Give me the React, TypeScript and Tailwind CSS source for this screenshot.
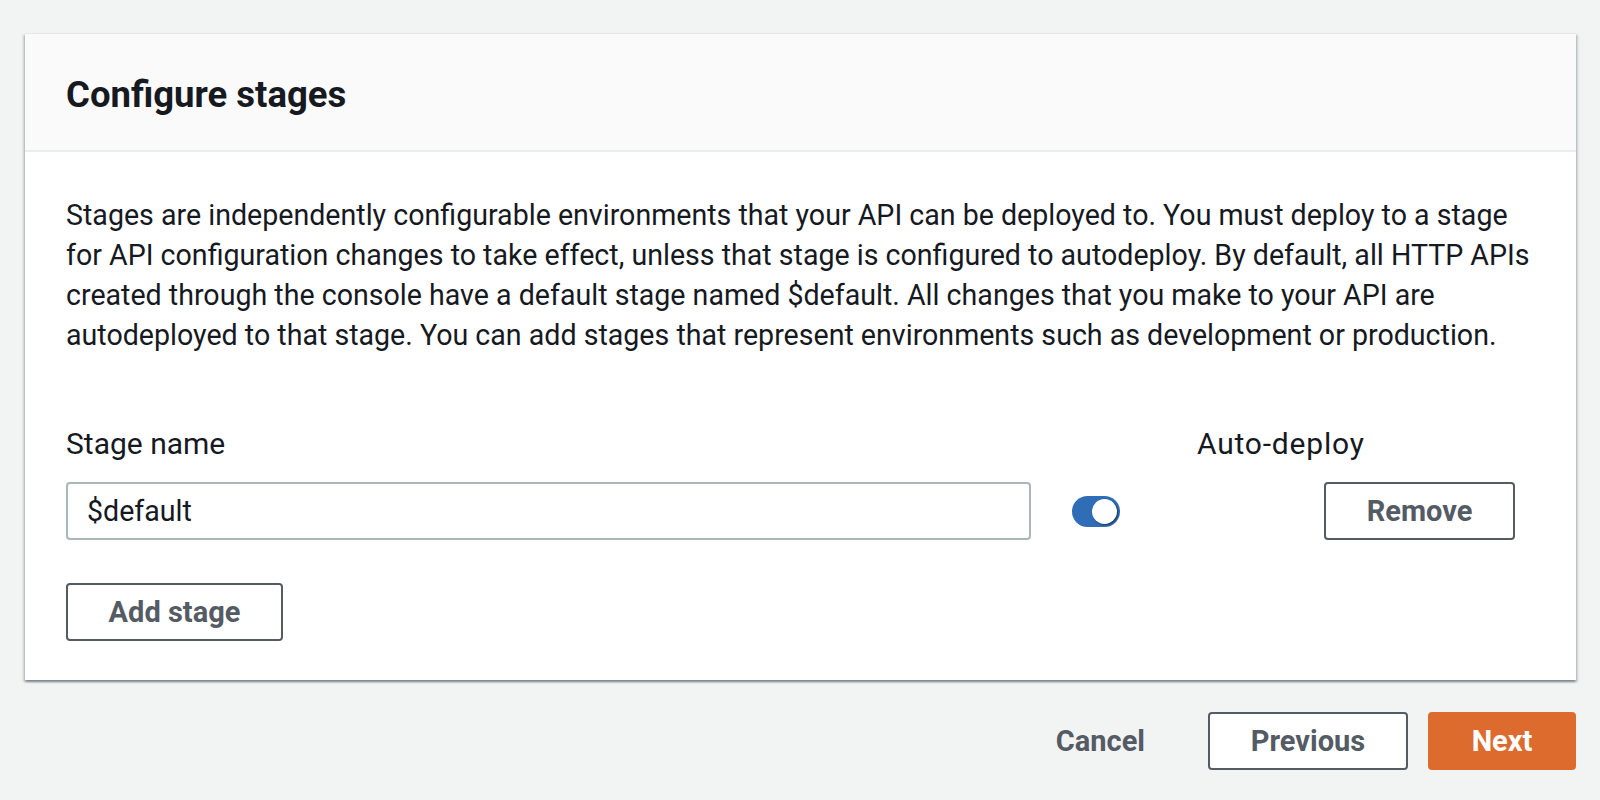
import React from "react";

const btn =
  "h-[58px] rounded-[4px] border-2 text-[29px] font-bold leading-none flex items-center justify-center";

export default function App() {
  return (
    <div className="min-h-[800px] w-full bg-[#f2f3f3] pt-[33px] pl-[25px] pr-[24px] font-['Roboto',sans-serif] text-[#16191f]">
      <div className="bg-white border-t border-[#e6e8e8] shadow-[0_2px_2px_0_rgba(0,28,36,0.3),2px_2px_2px_0_rgba(0,28,36,0.15),-2px_2px_2px_0_rgba(0,28,36,0.15)]">
        <div className="bg-[#fafafa] border-b-2 border-[#eaeded] pl-[41px] pt-[39px] pb-[33px]">
          <h2 className="text-[36.5px] leading-[44px] font-bold">Configure stages</h2>
        </div>
        <div className="px-[41px] pt-[43px] pb-[39px]">
          <p className="text-[28.6px] leading-[40px]">
            Stages are independently configurable environments that your API can be deployed to. You must deploy to a
            stage for API configuration changes to take effect, unless that stage is configured to autodeploy. By
            default, all HTTP APIs created through the console have a default stage named $default. All changes that
            you make to your API are autodeployed to that stage. You can add stages that represent environments such as
            development or production.
          </p>

          <div className="mt-[69px] flex text-[30px] leading-[40px]">
            <div className="w-[1131px]">Stage name</div>
            <div className="tracking-[0.8px]">Auto-deploy</div>
          </div>

          <div className="mt-[18px] flex items-center">
            <div className="w-[965px] h-[58px] rounded-[4px] border-2 border-[#aab7b8] bg-white flex items-center pl-[19px] text-[28.6px]">
              $default
            </div>
            <div className="ml-[41px] w-[48px] h-[31px] rounded-full bg-[#2f6eb6] flex items-center justify-end pr-[3px]">
              <div className="w-[25px] h-[25px] rounded-full bg-white shadow-[1px_1px_2px_rgba(0,0,0,0.55)]" />
            </div>
            <button className={`${btn} ml-[204px] w-[191px] border-[#545b64] bg-white text-[#545b64]`}>Remove</button>
          </div>

          <button className={`${btn} mt-[43px] w-[217px] border-[#545b64] bg-white text-[#545b64]`}>Add stage</button>
        </div>
      </div>

      <div className="mt-[32px] flex justify-end gap-[20px]">
        <button className={`${btn} px-[41px] border-transparent bg-transparent text-[#545b64]`}>Cancel</button>
        <button className={`${btn} w-[200px] border-[#545b64] bg-white text-[#545b64]`}>Previous</button>
        <button className={`${btn} w-[148px] border-[#dd6b2e] bg-[#dd6b2e] text-white`}>Next</button>
      </div>
    </div>
  );
}
